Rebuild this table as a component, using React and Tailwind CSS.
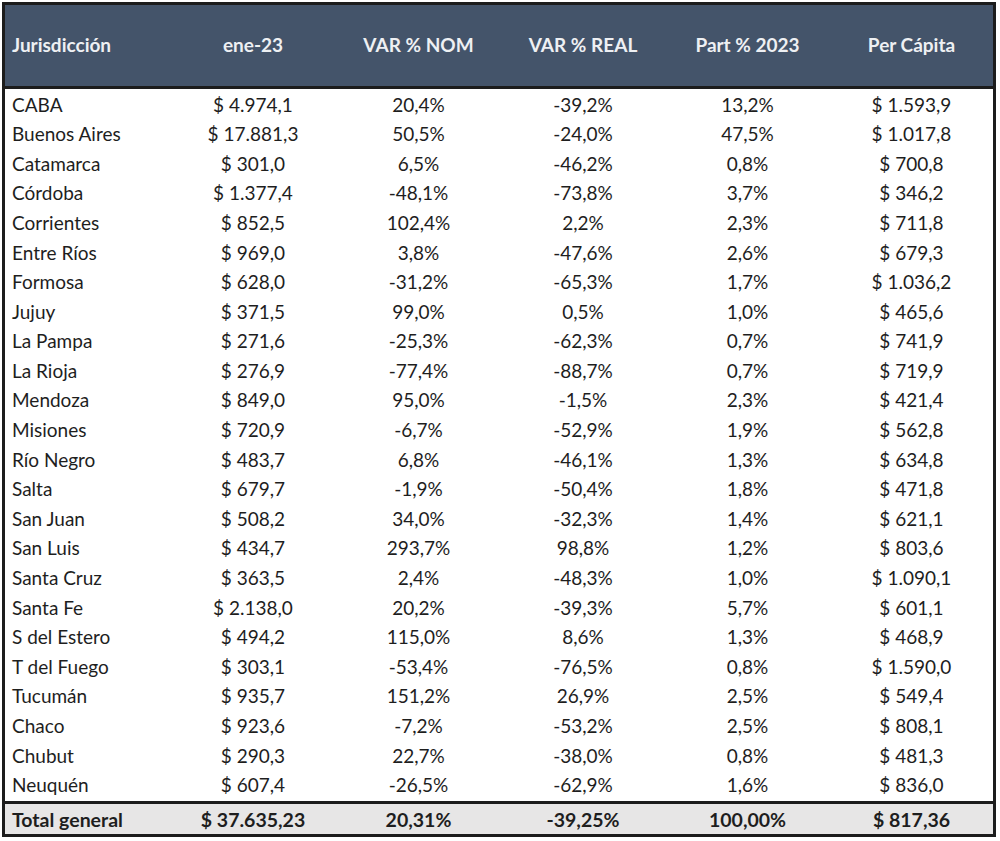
const rows = [
  ['CABA', '$ 4.974,1', '20,4%', '-39,2%', '13,2%', '$ 1.593,9'],
  ['Buenos Aires', '$ 17.881,3', '50,5%', '-24,0%', '47,5%', '$ 1.017,8'],
  ['Catamarca', '$ 301,0', '6,5%', '-46,2%', '0,8%', '$ 700,8'],
  ['Córdoba', '$ 1.377,4', '-48,1%', '-73,8%', '3,7%', '$ 346,2'],
  ['Corrientes', '$ 852,5', '102,4%', '2,2%', '2,3%', '$ 711,8'],
  ['Entre Ríos', '$ 969,0', '3,8%', '-47,6%', '2,6%', '$ 679,3'],
  ['Formosa', '$ 628,0', '-31,2%', '-65,3%', '1,7%', '$ 1.036,2'],
  ['Jujuy', '$ 371,5', '99,0%', '0,5%', '1,0%', '$ 465,6'],
  ['La Pampa', '$ 271,6', '-25,3%', '-62,3%', '0,7%', '$ 741,9'],
  ['La Rioja', '$ 276,9', '-77,4%', '-88,7%', '0,7%', '$ 719,9'],
  ['Mendoza', '$ 849,0', '95,0%', '-1,5%', '2,3%', '$ 421,4'],
  ['Misiones', '$ 720,9', '-6,7%', '-52,9%', '1,9%', '$ 562,8'],
  ['Río Negro', '$ 483,7', '6,8%', '-46,1%', '1,3%', '$ 634,8'],
  ['Salta', '$ 679,7', '-1,9%', '-50,4%', '1,8%', '$ 471,8'],
  ['San Juan', '$ 508,2', '34,0%', '-32,3%', '1,4%', '$ 621,1'],
  ['San Luis', '$ 434,7', '293,7%', '98,8%', '1,2%', '$ 803,6'],
  ['Santa Cruz', '$ 363,5', '2,4%', '-48,3%', '1,0%', '$ 1.090,1'],
  ['Santa Fe', '$ 2.138,0', '20,2%', '-39,3%', '5,7%', '$ 601,1'],
  ['S del Estero', '$ 494,2', '115,0%', '8,6%', '1,3%', '$ 468,9'],
  ['T del Fuego', '$ 303,1', '-53,4%', '-76,5%', '0,8%', '$ 1.590,0'],
  ['Tucumán', '$ 935,7', '151,2%', '26,9%', '2,5%', '$ 549,4'],
  ['Chaco', '$ 923,6', '-7,2%', '-53,2%', '2,5%', '$ 808,1'],
  ['Chubut', '$ 290,3', '22,7%', '-38,0%', '0,8%', '$ 481,3'],
  ['Neuquén', '$ 607,4', '-26,5%', '-62,9%', '1,6%', '$ 836,0'],
];

const headers = ['ene-23', 'VAR % NOM', 'VAR % REAL', 'Part % 2023', 'Per Cápita'];
const total = ['$ 37.635,23', '20,31%', '-39,25%', '100,00%', '$ 817,36'];

const cols = 'grid grid-cols-[165px_166px_165px_164px_165px_1fr]';

export default function App() {
  return (
    <div className="w-[1000px] h-[841px] bg-white pt-[2px] pl-[2px]" style={{ fontFamily: 'Lato, "Open Sans", sans-serif' }}>
      <div className="w-[994px] border-[3px] border-[#1c1c1c] text-[#1e1e1e]">
        <div className={`${cols} h-[84px] items-center bg-[#44546a] text-[#eef0f3] font-bold text-[19px] border-b-[3px] border-[#1c1c1c]`}>
          <div className="pl-[7px]">Jurisdicción</div>
          {headers.map((h) => (
            <div key={h} className="text-center">{h}</div>
          ))}
        </div>
        <div className="py-[1px]">
          {rows.map((r) => (
            <div key={r[0]} className={`${cols} h-[29.6px] items-center text-[19px]`}>
              <div className="pl-[7px]">{r[0]}</div>
              {r.slice(1).map((v, i) => (
                <div key={i} className="text-center">{v}</div>
              ))}
            </div>
          ))}
        </div>
        <div className={`${cols} h-[33px] items-center bg-[#e7e6e6] font-bold text-[19.5px] border-t-[3px] border-[#1c1c1c]`}>
          <div className="pl-[7px]">Total general</div>
          {total.map((v, i) => (
            <div key={i} className="text-center">{v}</div>
          ))}
        </div>
      </div>
    </div>
  );
}
